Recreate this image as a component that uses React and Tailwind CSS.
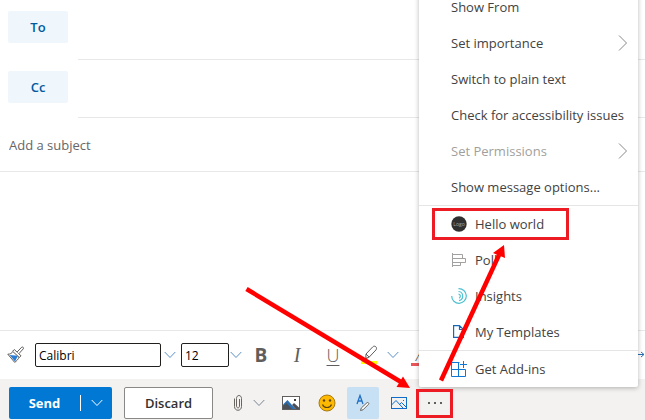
import React from "react";

const ChevronDown = ({ className = "" }) => (
  <svg className={className} width="12" height="8" viewBox="0 0 12 8" fill="none" stroke="currentColor" aria-hidden="true">
    <path d="M0.7 1L6 6.5L11.3 1" />
  </svg>
);

const ChevronRight = ({ className = "" }) => (
  <svg className={className} width="10" height="16" viewBox="0 0 10 16" fill="none" stroke="currentColor" aria-hidden="true">
    <path d="M1 0.5L8.500 8L1 15.5" />
  </svg>
);

const PainterIcon = () => (
  <svg width="18" height="18" viewBox="0 0 18 18" fill="none" stroke="#605e5c" aria-hidden="true">
    <path d="M2.5 9L11 9.8L8 15.5Z" fill="#2b7cd3" stroke="none" />
    <path d="M0.8 8.2C3 8.3 4.800 7.3 6.300 5.200L12.300 10.900C11 13.500 9.500 15.300 7.600 16.300Z" />
    <path d="M5.600 5.300L7.300 3.500L14 9.800L12.300 11.500Z" fill="#fff" />
    <path d="M10.100 6L14.700 1.200C15.500 0.400 17.200 1.800 16.300 2.800L11.900 7.700" fill="#fff" />
  </svg>
);

const HighlightIcon = () => (
  <svg width="18" height="20" viewBox="0 0 18 20" fill="none" stroke="#605e5c" aria-hidden="true">
    <path d="M1 17.500h16" stroke="#ffff00" strokeWidth="3" />
    <path d="M6 9L12.800 1.800C13.600 1 15 1 15.900 1.800C16.800 2.700 16.700 4.100 15.900 5L9.200 12.100L5.800 13.400L3.200 16.200H5.600L7 13M6 9L9.200 12.100M6 9L5.800 13.400" />
  </svg>
);

const ClipIcon = () => (
  <svg width="10" height="18" viewBox="0 0 10 18" fill="none" stroke="#68645f" aria-hidden="true">
    <path d="M1.500 4.500V12.500C1.500 17.500 8.500 17.500 8.500 12.500V4.500C8.500 0.500 3.500 0.500 3.500 4.500V12C3.500 14.500 6.500 14.500 6.500 12V5" />
  </svg>
);

const PhotoIcon = () => (
  <svg width="18" height="14" viewBox="0 0 18 14" fill="none" aria-hidden="true">
    <rect x="0.5" y="0.5" width="17" height="13" fill="#fff" stroke="#605e5c" />
    <path d="M1 8.500L5.500 4L13.500 13H1Z" fill="#2b6fb3" />
    <path d="M1 10L4.500 7L10 13H1Z" fill="#4b5058" />
    <path d="M10 9L12 7L17 11.500V13H13.500Z" fill="#4b5058" />
    <rect x="12" y="3" width="2" height="2" fill="#3a3a3a" />
  </svg>
);

const SmileIcon = () => (
  <svg width="18" height="18" viewBox="0 0 18 18" fill="none" aria-hidden="true">
    <circle cx="9" cy="9" r="8" fill="#ffb900" stroke="#a87a12" />
    <circle cx="6" cy="6.500" r="1.200" fill="#5c4510" />
    <circle cx="12" cy="6.500" r="1.200" fill="#5c4510" />
    <path d="M4.500 10.500C6 14.500 12 14.500 13.500 10.500" stroke="#5c4510" strokeWidth="1.200" />
  </svg>
);

const FormatIcon = () => (
  <svg width="14" height="18" viewBox="0 0 14 18" fill="none" aria-hidden="true">
    <path d="M1 10L4 1.500L7 10M2 7H6" stroke="#1f6fc5" strokeWidth="1.300" />
    <path d="M4.500 16.500L5.300 14L11 8.700C12 8 13.500 9.300 12.500 10.300L7 15.800Z" fill="#fff" stroke="#68645f" />
  </svg>
);

const InlinePictureIcon = () => (
  <svg width="16" height="12" viewBox="0 0 16 12" fill="none" stroke="#0f6cc8" aria-hidden="true">
    <rect x="0.5" y="0.5" width="15" height="11" />
    <path d="M0.5 8L5 3.500L12 11M8.500 7.500L10.500 5.500L15.500 10.500" />
    <path d="M12 3.500h1" />
  </svg>
);

const LogoIcon = () => (
  <svg width="16" height="16" viewBox="0 0 16 16" aria-hidden="true">
    <circle cx="8" cy="8" r="7.700" fill="#303030" />
    <text x="8" y="9.500" textAnchor="middle" fontSize="5" fill="#a6a6a6" fontFamily="Open Sans, sans-serif">Logo</text>
  </svg>
);

const PollIcon = () => (
  <svg width="16" height="16" viewBox="0 0 16 16" fill="none" stroke="#a3a19f" aria-hidden="true">
    <path d="M1.500 1V15M1.500 2.500H11.500V6.500H1.500M1.500 6.500H14.500V10.500H1.500M9.500 10.500V13.500H1.500" />
  </svg>
);

const InsightsIcon = () => (
  <svg width="16" height="16" viewBox="0 0 16 16" fill="none" stroke="#4fc0d0" strokeWidth="1.200" aria-hidden="true">
    <path d="M7.500 0.700A7.300 7.300 0 1 1 0.700 8" />
    <path d="M7.500 3.500A4.600 4.600 0 0 1 8 12.600" />
    <path d="M7.500 6A2.200 2.200 0 0 1 8 10.200" />
  </svg>
);

const TemplateIcon = () => (
  <svg width="16" height="16" viewBox="0 0 16 16" fill="none" stroke="#1769b8" strokeWidth="1.200" aria-hidden="true">
    <path d="M2.600 1.600H8.500L12.400 5.500V13.400H2.600ZM8.500 1.600V5.500H12.400" />
  </svg>
);

const AddInsIcon = () => (
  <svg width="16" height="16" viewBox="0 0 16 16" fill="none" stroke="#0f78d4" aria-hidden="true">
    <path d="M8.500 1.500H0.500V15.500H14.500V8.500H0.500M7.500 1.500V15.500M12.500 0V7M9 3.500H16" />
  </svg>
);

const MenuItem = ({ children, icon, submenu, disabled }) => (
  <li>
    <button
      type="button"
      disabled={disabled}
      className="flex h-9 w-full items-center gap-2 whitespace-nowrap pl-8 pr-[10px] text-left leading-[14px] text-[#424242] disabled:text-[#a19f9d]"
    >
      {icon}
      <span>{children}</span>
      {submenu && <ChevronRight className="ml-auto shrink-0 text-[#8a8886]" />}
    </button>
  </li>
);

const MoreMenu = () => (
  <div className="absolute bottom-full left-0 w-[219px] rounded-[2px] bg-white shadow-[0_1px_5px_rgba(0,0,0,0.28)]">
    <ul>
      <MenuItem>Show From</MenuItem>
      <MenuItem submenu>Set importance</MenuItem>
      <MenuItem>Switch to plain text</MenuItem>
      <MenuItem>Check for accessibility issues</MenuItem>
      <MenuItem submenu disabled>Set Permissions</MenuItem>
      <MenuItem>Show message options...</MenuItem>
    </ul>
    <ul className="border-t border-[#e5e5e5]">
      <MenuItem icon={<LogoIcon />}>Hello world</MenuItem>
      <MenuItem icon={<PollIcon />}>Poll</MenuItem>
      <MenuItem icon={<InsightsIcon />}>Insights</MenuItem>
      <MenuItem icon={<TemplateIcon />}>My Templates</MenuItem>
    </ul>
    <ul className="border-t border-[#e5e5e5]">
      <MenuItem icon={<AddInsIcon />}>Get Add-ins</MenuItem>
    </ul>
  </div>
);

/* Callouts that lead from the More button to the add-in's entry. */
const Callouts = () => (
  <svg
    className="pointer-events-none absolute bottom-0 -left-[179px]"
    width="340"
    height="219"
    viewBox="240 200 340 219"
    fill="none"
    aria-hidden="true"
  >
    <rect x="433.500" y="209.500" width="134" height="29" stroke="#ed1c24" strokeWidth="3" />
    <rect x="417.500" y="390.500" width="34" height="26" stroke="#ed1c24" strokeWidth="3" />
    <path d="M246.500 289L401 382" stroke="#f00" strokeWidth="4.500" />
    <path d="M410 388L403 376.500L396.500 387Z" fill="#f00" />
    <path d="M441 380.500L499 255" stroke="#f00" strokeWidth="4.500" />
    <path d="M504 245L505 258L493 253Z" fill="#f00" />
  </svg>
);

const Recipient = ({ label, height }) => (
  <div className={`flex items-stretch pl-2 ${height}`}>
    <button type="button" className="mt-[11px] h-8 w-[60px] rounded-[2px] bg-[#eff6fc] font-semibold text-[#005a9e]">
      {label}
    </button>
    <input aria-label={label} className="ml-[10px] min-w-0 flex-1 border-b border-[#e8e8e8] outline-none" />
  </div>
);

const Tool = ({ label, active, children }) => (
  <button
    type="button"
    aria-label={label}
    className={`flex size-8 shrink-0 items-center justify-center ${active ? "rounded-[2px] bg-[#c7e0f4]" : ""}`}
  >
    {children}
  </button>
);

export default function App() {
  return (
    <main className="flex h-screen flex-col overflow-hidden bg-white font-['Open_Sans','Noto_Sans',sans-serif] text-[13px] leading-5 text-[#424242]">
      <Recipient label="To" height="h-[60px]" />
      <Recipient label="Cc" height="h-[58px]" />
      <input
        aria-label="Subject"
        placeholder="Add a subject"
        className="h-[54px] w-full shrink-0 border-b border-[#e8e8e8] px-[9px] outline-none placeholder:text-[#666666]"
      />
      <textarea aria-label="Message body" className="min-h-0 w-full flex-1 resize-none p-2 outline-none" />

      <div className="flex h-[49px] shrink-0 items-center border-t border-[#e8e8e8] text-[#605e5c]">
        <button type="button" aria-label="Format painter" className="ml-[7px] mr-[10px] shrink-0">
          <PainterIcon />
        </button>
        <input
          aria-label="Font"
          defaultValue="Calibri"
          className="h-6 w-[126px] rounded-[2px] border border-[#201f1e] px-[3px] text-[12px] text-black outline-none"
        />
        <button type="button" aria-label="Font list" className="flex w-[18px] shrink-0 justify-center text-[#5b8fc7]">
          <ChevronDown />
        </button>
        <input
          aria-label="Font size"
          defaultValue="12"
          className="ml-[2px] h-6 w-12 rounded-[2px] border border-[#201f1e] px-[3px] text-[12px] text-black outline-none"
        />
        <button type="button" aria-label="Size list" className="flex w-[14px] shrink-0 justify-center text-[#5b8fc7]">
          <ChevronDown />
        </button>
        <button type="button" aria-label="Bold" className="w-9 shrink-0 text-[19px] font-bold">B</button>
        <button type="button" aria-label="Italic" className="w-9 shrink-0 font-['Liberation_Serif',serif] text-[20px] italic">I</button>
        <button type="button" aria-label="Underline" className="w-9 shrink-0 text-[18px] font-light underline decoration-1 underline-offset-3">U</button>
        <button type="button" aria-label="Highlight" className="flex w-9 shrink-0 justify-center">
          <HighlightIcon />
        </button>
        <button type="button" aria-label="Highlight colours" className="flex w-3 shrink-0 justify-center text-[#5b8fc7]">
          <ChevronDown />
        </button>
        <button type="button" aria-label="Font colour" className="ml-3 w-5 shrink-0 border-b-[3px] border-[#e8575a] text-[18px] font-light italic leading-[18px]">A</button>
        <button type="button" aria-label="Left to right" className="ml-auto shrink-0 text-[#2b6fb3]">
          <svg width="16" height="8" viewBox="0 0 16 8" fill="none" stroke="currentColor" aria-hidden="true">
            <path d="M0 3.500H15M12 1L15 3.500L12 6" />
          </svg>
        </button>
      </div>

      <div className="flex h-[41px] shrink-0 items-start bg-[#f3f2f1] pl-[9px] pt-2">
        <div className="flex h-8 w-[103px] shrink-0 items-center rounded-[2px] bg-[#0078d4] text-white">
          <button type="button" className="h-8 w-[71px] font-bold">Send</button>
          <button type="button" aria-label="Send options" className="flex h-4 flex-1 items-center justify-center border-l border-white">
            <ChevronDown />
          </button>
        </div>
        <button type="button" className="ml-3 h-8 w-[89px] shrink-0 rounded-[2px] border border-[#8a8886] bg-white font-semibold text-[#323130]">
          Discard
        </button>
        <div className="ml-2 flex gap-1">
          <button type="button" aria-label="Attach" className="flex h-8 w-[50px] items-center gap-[10px] pl-3 text-[#7a8794]">
            <ClipIcon />
            <ChevronDown className="shrink-0" />
          </button>
          <Tool label="Insert pictures"><PhotoIcon /></Tool>
          <Tool label="Insert emoji"><SmileIcon /></Tool>
          <Tool label="Formatting options" active><FormatIcon /></Tool>
          <Tool label="Inline picture"><InlinePictureIcon /></Tool>
          <div className="relative">
            <Tool label="More options">
              <svg width="16" height="4" viewBox="0 0 16 4" fill="#605e5c" aria-hidden="true">
                <path d="M1 1h2v2h-2zM7 1h2v2h-2zM13 1h2v2h-2z" />
              </svg>
            </Tool>
            <MoreMenu />
            <Callouts />
          </div>
        </div>
      </div>
    </main>
  );
}
